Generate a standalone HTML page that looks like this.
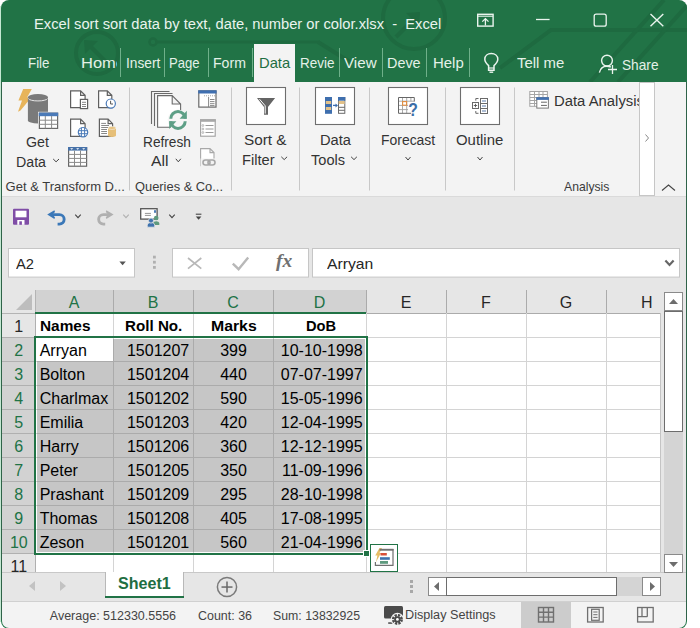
<!DOCTYPE html><html><head><meta charset="utf-8"><style>
html,body{margin:0;padding:0;width:700px;height:628px;overflow:hidden;background:#fff}
.a{position:absolute;display:block}
.t{position:absolute;z-index:2;white-space:pre;line-height:normal;font-family:"Liberation Sans",sans-serif}
</style></head><body>
<div class="a" style="left:0px;top:0px;width:700px;height:628px;background:#ffffff;"></div>
<div class="a" style="left:0px;top:6px;width:1px;height:616px;background:#c4e8d2;"></div>
<div class="a" style="left:1px;top:0px;width:686px;height:629px;background:#217346;border-radius:8px 8px 8px 8px;"></div>
<svg class="a" style="left:0;top:0" width="700" height="82" viewBox="0 0 700 82"><defs><clipPath id="wc"><rect x="1" y="0" width="686" height="100" rx="8"/></clipPath></defs><g clip-path="url(#wc)"><g fill="none" stroke="#1e6a40" stroke-width="4"><circle cx="97" cy="53" r="21"/><path d="M108,64 L90,46"/><circle cx="414" cy="18" r="31"/><path d="M396,37 L414,19"/><path d="M500,68 L551,30 L690,30"/><path d="M664,0 L590,82"/><path d="M692,0 L618,82"/><path d="M318,42 L350,62"/></g><g fill="#1e6a40"><polygon points="84,40 98,41 85,54"/><polygon points="420,12 406,13 419,26"/></g><circle cx="153" cy="42" r="3.5" fill="none" stroke="#1e6a40" stroke-width="2.5"/><path d="M157,42 H320" stroke="#1e6a40" stroke-width="3"/></g></svg>
<div class="a" style="left:2px;top:82px;width:684px;height:114px;background:#f3f3f3;"></div>
<div class="a" style="left:2px;top:196px;width:684px;height:1px;background:#dadada;"></div>
<div class="a" style="left:2px;top:197px;width:684px;height:93px;background:#e6e6e6;"></div>
<div class="a" style="left:36px;top:313px;width:624px;height:259px;background:#ffffff;"></div>
<div class="a" style="left:2px;top:290px;width:659px;height:23px;background:#e6e6e6;"></div>
<div class="a" style="left:35px;top:290px;width:331px;height:23px;background:#d2d2d2;"></div>
<div class="a" style="left:2px;top:313px;width:33px;height:259px;background:#e6e6e6;"></div>
<div class="a" style="left:2px;top:337px;width:33px;height:216px;background:#d2d2d2;"></div>
<svg class="a" style="left:16px;top:294px;" width="17" height="16" viewBox="0 0 17 16"><polygon points="16,0 16,16 0,16" fill="#bdbdbd"/></svg>
<div class="a" style="left:113px;top:290px;width:1px;height:23px;background:#ababab;"></div>
<div class="a" style="left:193px;top:290px;width:1px;height:23px;background:#ababab;"></div>
<div class="a" style="left:273px;top:290px;width:1px;height:23px;background:#ababab;"></div>
<div class="a" style="left:366px;top:290px;width:1px;height:23px;background:#ababab;"></div>
<div class="a" style="left:446px;top:290px;width:1px;height:23px;background:#ababab;"></div>
<div class="a" style="left:526px;top:290px;width:1px;height:23px;background:#ababab;"></div>
<div class="a" style="left:606px;top:290px;width:1px;height:23px;background:#ababab;"></div>
<div class="a" style="left:35px;top:290px;width:1px;height:23px;background:#b4b4b4;"></div>
<div class="a" style="left:2px;top:313px;width:33px;height:1px;background:#b4b4b4;"></div>
<div class="a" style="left:366px;top:313px;width:294px;height:1px;background:#ababab;"></div>
<div class="a" style="left:2px;top:337px;width:33px;height:1px;background:#b0b0b0;"></div>
<div class="a" style="left:2px;top:361px;width:33px;height:1px;background:#b0b0b0;"></div>
<div class="a" style="left:2px;top:385px;width:33px;height:1px;background:#b0b0b0;"></div>
<div class="a" style="left:2px;top:409px;width:33px;height:1px;background:#b0b0b0;"></div>
<div class="a" style="left:2px;top:433px;width:33px;height:1px;background:#b0b0b0;"></div>
<div class="a" style="left:2px;top:457px;width:33px;height:1px;background:#b0b0b0;"></div>
<div class="a" style="left:2px;top:481px;width:33px;height:1px;background:#b0b0b0;"></div>
<div class="a" style="left:2px;top:505px;width:33px;height:1px;background:#b0b0b0;"></div>
<div class="a" style="left:2px;top:529px;width:33px;height:1px;background:#b0b0b0;"></div>
<div class="a" style="left:2px;top:553px;width:33px;height:1px;background:#b0b0b0;"></div>
<div class="a" style="left:35px;top:313px;width:1px;height:259px;background:#b0b0b0;"></div>
<div class="a" style="left:113px;top:313px;width:1px;height:259px;background:#d4d4d4;"></div>
<div class="a" style="left:193px;top:313px;width:1px;height:259px;background:#d4d4d4;"></div>
<div class="a" style="left:273px;top:313px;width:1px;height:259px;background:#d4d4d4;"></div>
<div class="a" style="left:366px;top:313px;width:1px;height:259px;background:#d4d4d4;"></div>
<div class="a" style="left:446px;top:313px;width:1px;height:259px;background:#d4d4d4;"></div>
<div class="a" style="left:526px;top:313px;width:1px;height:259px;background:#d4d4d4;"></div>
<div class="a" style="left:606px;top:313px;width:1px;height:259px;background:#d4d4d4;"></div>
<div class="a" style="left:36px;top:337px;width:624px;height:1px;background:#d4d4d4;"></div>
<div class="a" style="left:36px;top:361px;width:624px;height:1px;background:#d4d4d4;"></div>
<div class="a" style="left:36px;top:385px;width:624px;height:1px;background:#d4d4d4;"></div>
<div class="a" style="left:36px;top:409px;width:624px;height:1px;background:#d4d4d4;"></div>
<div class="a" style="left:36px;top:433px;width:624px;height:1px;background:#d4d4d4;"></div>
<div class="a" style="left:36px;top:457px;width:624px;height:1px;background:#d4d4d4;"></div>
<div class="a" style="left:36px;top:481px;width:624px;height:1px;background:#d4d4d4;"></div>
<div class="a" style="left:36px;top:505px;width:624px;height:1px;background:#d4d4d4;"></div>
<div class="a" style="left:36px;top:529px;width:624px;height:1px;background:#d4d4d4;"></div>
<div class="a" style="left:36px;top:553px;width:624px;height:1px;background:#d4d4d4;"></div>
<div class="a" style="left:660px;top:313px;width:1px;height:259px;background:#c4c4c4;"></div>
<div class="a" style="left:37px;top:339px;width:328px;height:213px;background:#c6c6c6;"></div>
<div class="a" style="left:37px;top:339px;width:76px;height:22px;background:#ffffff;"></div>
<div class="a" style="left:113px;top:339px;width:1px;height:213px;background:#ababab;"></div>
<div class="a" style="left:193px;top:339px;width:1px;height:213px;background:#ababab;"></div>
<div class="a" style="left:273px;top:339px;width:1px;height:213px;background:#ababab;"></div>
<div class="a" style="left:37px;top:361px;width:328px;height:1px;background:#ababab;"></div>
<div class="a" style="left:37px;top:385px;width:328px;height:1px;background:#ababab;"></div>
<div class="a" style="left:37px;top:409px;width:328px;height:1px;background:#ababab;"></div>
<div class="a" style="left:37px;top:433px;width:328px;height:1px;background:#ababab;"></div>
<div class="a" style="left:37px;top:457px;width:328px;height:1px;background:#ababab;"></div>
<div class="a" style="left:37px;top:481px;width:328px;height:1px;background:#ababab;"></div>
<div class="a" style="left:37px;top:505px;width:328px;height:1px;background:#ababab;"></div>
<div class="a" style="left:37px;top:529px;width:328px;height:1px;background:#ababab;"></div>
<div class="a" style="left:113px;top:339px;width:1px;height:22px;background:#ababab;"></div>
<div class="a" style="left:35px;top:312px;width:331px;height:2px;background:#217346;"></div>
<div class="a" style="left:34px;top:336px;width:334px;height:2px;background:#217346;"></div>
<div class="a" style="left:34px;top:336px;width:2px;height:219px;background:#217346;"></div>
<div class="a" style="left:366px;top:336px;width:2px;height:214px;background:#217346;"></div>
<div class="a" style="left:34px;top:553px;width:329px;height:2px;background:#217346;"></div>
<div class="a" style="left:363px;top:550px;width:7px;height:7px;background:#ffffff;"></div>
<div class="a" style="left:364px;top:551px;width:5px;height:5px;background:#217346;"></div>
<div class="a" style="left:370px;top:544px;width:28px;height:28px;background:#ffffff;box-sizing:border-box;border:1px solid #217346;"></div>
<div class="a" style="left:661px;top:290px;width:25px;height:283px;background:#e6e6e6;"></div>
<div class="a" style="left:664px;top:292px;width:19px;height:19px;background:#ffffff;box-sizing:border-box;border:1px solid #8a8a8a;"></div>
<svg class="a" style="left:664px;top:292px;" width="19" height="19" viewBox="0 0 19 19"><polygon points="5,12 14,12 9.5,7" fill="#6d6d6d"/></svg>
<div class="a" style="left:664px;top:311px;width:19px;height:243px;background:#d4d4d4;"></div>
<div class="a" style="left:664px;top:311px;width:19px;height:121px;background:#ffffff;box-sizing:border-box;border:1.5px solid #6d6d6d;"></div>
<div class="a" style="left:2px;top:572px;width:684px;height:29px;background:#e6e6e6;"></div>
<div class="a" style="left:2px;top:572px;width:684px;height:1px;background:#c8c8c8;"></div>
<div class="a" style="left:2px;top:601px;width:684px;height:1px;background:#d0d0d0;"></div>
<div class="a" style="left:664px;top:554px;width:19px;height:19px;background:#ffffff;box-sizing:border-box;border:1px solid #8a8a8a;"></div>
<svg class="a" style="left:664px;top:554px;" width="19" height="19" viewBox="0 0 19 19"><polygon points="5,8 14,8 9.5,13" fill="#6d6d6d"/></svg>
<div class="a" style="left:105px;top:572px;width:79px;height:24px;background:#ffffff;box-sizing:border-box;border-left:1px solid #b8b8b8;border-right:1px solid #b8b8b8;"></div>
<div class="a" style="left:105px;top:596px;width:79px;height:2px;background:#217346;"></div>
<svg class="a" style="left:29px;top:581px;" width="8" height="11" viewBox="0 0 8 11"><polygon points="6,0 6,10 0,5" fill="#c2c2c2"/></svg>
<svg class="a" style="left:59px;top:581px;" width="8" height="11" viewBox="0 0 8 11"><polygon points="1,0 1,10 7,5" fill="#c2c2c2"/></svg>
<svg class="a" style="left:216px;top:576px;" width="22" height="22" viewBox="0 0 22 22"><circle cx="11" cy="11" r="9.6" fill="none" stroke="#7a7a7a" stroke-width="1.5"/><rect x="5.5" y="10.3" width="11" height="1.5" fill="#6a6a6a"/><rect x="10.25" y="5.5" width="1.5" height="11" fill="#6a6a6a"/></svg>
<div class="a" style="left:410px;top:580px;width:3px;height:3px;background:#a8a8a8;"></div>
<div class="a" style="left:410px;top:585px;width:3px;height:3px;background:#a8a8a8;"></div>
<div class="a" style="left:410px;top:590px;width:3px;height:3px;background:#a8a8a8;"></div>
<div class="a" style="left:428px;top:577px;width:233px;height:19px;background:#d4d4d4;"></div>
<div class="a" style="left:428px;top:577px;width:19px;height:19px;background:#ffffff;box-sizing:border-box;border:1px solid #8a8a8a;"></div>
<svg class="a" style="left:428px;top:577px;" width="19" height="19" viewBox="0 0 19 19"><polygon points="11,5 11,14 6,9.5" fill="#6d6d6d"/></svg>
<div class="a" style="left:446px;top:577px;width:171px;height:19px;background:#ffffff;box-sizing:border-box;border:1.5px solid #6d6d6d;"></div>
<div class="a" style="left:642px;top:577px;width:19px;height:19px;background:#ffffff;box-sizing:border-box;border:1px solid #8a8a8a;"></div>
<svg class="a" style="left:642px;top:577px;" width="19" height="19" viewBox="0 0 19 19"><polygon points="8,5 8,14 13,9.5" fill="#6d6d6d"/></svg>
<div class="a" style="left:2px;top:602px;width:684px;height:26px;background:#f3f3f3;border-radius:0 0 7px 7px;"></div>
<div class="a" style="left:521px;top:602px;width:50px;height:26px;background:#cccccc;"></div>
<div class="a" style="left:1px;top:82px;width:1px;height:538px;background:#2f6349;"></div>
<div class="a" style="left:686px;top:82px;width:1px;height:538px;background:#2f6349;"></div>
<div class="t" style="left:34.00px;top:16.03px;font-size:14px;color:#eaf4ee;transform:scaleX(1.0510);transform-origin:0 0;">Excel sort sort data by text, date, number or color.xlsx  -  Excel</div>
<div class="t" style="left:27.50px;top:54.88px;font-size:14.5px;color:#e4f1e8;transform:scaleX(0.9210);transform-origin:0 0;">File</div>
<div class="a" style="left:78px;top:44px;width:38.5px;height:36px;overflow:hidden">
<div class="t" style="left:3.40px;top:10.88px;font-size:14.5px;color:#e4f1e8;transform:scaleX(1.1365);transform-origin:0 0;">Home</div>
</div>
<div class="t" style="left:125.70px;top:54.88px;font-size:14.5px;color:#e4f1e8;transform:scaleX(0.9462);transform-origin:0 0;">Insert</div>
<div class="t" style="left:169.40px;top:54.88px;font-size:14.5px;color:#e4f1e8;transform:scaleX(0.9038);transform-origin:0 0;">Page</div>
<div class="t" style="left:213.40px;top:54.88px;font-size:14.5px;color:#e4f1e8;transform:scaleX(0.9717);transform-origin:0 0;">Form</div>
<div class="a" style="left:254px;top:44px;width:41px;height:38px;background:#f3f3f3;"></div>
<div class="t" style="left:258.50px;top:54.88px;font-size:14.5px;color:#1e6e42;transform:scaleX(1.0174);transform-origin:0 0;">Data</div>
<div class="t" style="left:300.30px;top:54.88px;font-size:14.5px;color:#e4f1e8;transform:scaleX(0.9312);transform-origin:0 0;">Revie</div>
<div class="t" style="left:344.30px;top:54.88px;font-size:14.5px;color:#e4f1e8;transform:scaleX(1.0457);transform-origin:0 0;">View</div>
<div class="t" style="left:387.20px;top:54.88px;font-size:14.5px;color:#e4f1e8;transform:scaleX(0.9924);transform-origin:0 0;">Deve</div>
<div class="t" style="left:432.50px;top:54.88px;font-size:14.5px;color:#e4f1e8;transform:scaleX(1.0303);transform-origin:0 0;">Help</div>
<div class="t" style="left:516.50px;top:54.58px;font-size:14.5px;color:#e4f1e8;transform:scaleX(1.0269);transform-origin:0 0;">Tell me</div>
<div class="t" style="left:621.50px;top:56.78px;font-size:14.5px;color:#e4f1e8;transform:scaleX(0.9428);transform-origin:0 0;">Share</div>
<div class="a" style="left:120px;top:48px;width:1px;height:29px;background:#6fb08a;"></div>
<div class="a" style="left:164px;top:48px;width:1px;height:29px;background:#6fb08a;"></div>
<div class="a" style="left:208px;top:48px;width:1px;height:29px;background:#6fb08a;"></div>
<div class="a" style="left:252px;top:48px;width:1px;height:29px;background:#6fb08a;"></div>
<div class="a" style="left:339px;top:48px;width:1px;height:29px;background:#6fb08a;"></div>
<div class="a" style="left:382px;top:48px;width:1px;height:29px;background:#6fb08a;"></div>
<div class="a" style="left:426px;top:48px;width:1px;height:29px;background:#6fb08a;"></div>
<div class="a" style="left:469px;top:48px;width:1px;height:29px;background:#6fb08a;"></div>
<div class="t" style="left:26.30px;top:134.13px;font-size:14px;color:#333333;transform:scaleX(1.0160);transform-origin:0 0;">Get</div>
<div class="t" style="left:16.00px;top:153.83px;font-size:14px;color:#333333;transform:scaleX(1.0132);transform-origin:0 0;">Data</div>
<div class="t" style="left:142.50px;top:133.53px;font-size:14px;color:#333333;transform:scaleX(0.9776);transform-origin:0 0;">Refresh</div>
<div class="t" style="left:151.00px;top:153.33px;font-size:14px;color:#333333;transform:scaleX(1.1261);transform-origin:0 0;">All</div>
<div class="t" style="left:244.40px;top:131.73px;font-size:14px;color:#333333;transform:scaleX(1.0946);transform-origin:0 0;">Sort &amp;</div>
<div class="t" style="left:242.40px;top:151.73px;font-size:14px;color:#333333;transform:scaleX(1.0489);transform-origin:0 0;">Filter</div>
<div class="t" style="left:319.60px;top:131.73px;font-size:14px;color:#333333;transform:scaleX(1.0469);transform-origin:0 0;">Data</div>
<div class="t" style="left:311.00px;top:151.73px;font-size:14px;color:#333333;transform:scaleX(1.0401);transform-origin:0 0;">Tools</div>
<div class="t" style="left:380.50px;top:132.23px;font-size:14px;color:#333333;transform:scaleX(0.9952);transform-origin:0 0;">Forecast</div>
<div class="t" style="left:456.40px;top:132.23px;font-size:14px;color:#333333;transform:scaleX(1.0658);transform-origin:0 0;">Outline</div>
<div class="a" style="left:550px;top:88px;width:89px;height:24px;overflow:hidden">
<div class="t" style="left:4.00px;top:4.63px;font-size:14px;color:#333333;transform:scaleX(1.0608);transform-origin:0 0;">Data Analysis</div>
</div>
<div class="t" style="left:5.60px;top:179.24px;font-size:13px;color:#3b3b3b;">Get &amp; Transform D...</div>
<div class="t" style="left:135.00px;top:179.24px;font-size:13px;color:#3b3b3b;transform:scaleX(0.9904);transform-origin:0 0;">Queries &amp; Co...</div>
<div class="t" style="left:563.90px;top:179.13px;font-size:13px;color:#3b3b3b;transform:scaleX(0.9375);transform-origin:0 0;">Analysis</div>
<div class="t" style="left:15.70px;top:255.98px;font-size:14.5px;color:#262626;transform:scaleX(1.0134);transform-origin:0 0;">A2</div>
<div class="t" style="left:327.00px;top:255.98px;font-size:14.5px;color:#262626;transform:scaleX(1.0819);transform-origin:0 0;">Arryan</div>
<div class="t" style="left:68.64px;top:293.52px;font-size:16px;color:#217346;">A</div>
<div class="t" style="left:147.68px;top:293.52px;font-size:16px;color:#217346;">B</div>
<div class="t" style="left:227.24px;top:293.52px;font-size:16px;color:#217346;">C</div>
<div class="t" style="left:313.74px;top:293.52px;font-size:16px;color:#217346;">D</div>
<div class="t" style="left:400.68px;top:293.52px;font-size:16px;color:#262626;">E</div>
<div class="t" style="left:481.12px;top:293.52px;font-size:16px;color:#262626;">F</div>
<div class="t" style="left:559.76px;top:293.52px;font-size:16px;color:#262626;">G</div>
<div class="t" style="left:641.04px;top:293.52px;font-size:16px;color:#262626;">H</div>
<div class="t" style="left:14.36px;top:318.12px;font-size:16px;color:#262626;">1</div>
<div class="t" style="left:14.36px;top:342.12px;font-size:16px;color:#217346;">2</div>
<div class="t" style="left:14.36px;top:366.12px;font-size:16px;color:#217346;">3</div>
<div class="t" style="left:14.36px;top:390.12px;font-size:16px;color:#217346;">4</div>
<div class="t" style="left:14.36px;top:414.12px;font-size:16px;color:#217346;">5</div>
<div class="t" style="left:14.36px;top:438.12px;font-size:16px;color:#217346;">6</div>
<div class="t" style="left:14.36px;top:462.12px;font-size:16px;color:#217346;">7</div>
<div class="t" style="left:14.36px;top:486.12px;font-size:16px;color:#217346;">8</div>
<div class="t" style="left:14.36px;top:510.12px;font-size:16px;color:#217346;">9</div>
<div class="t" style="left:9.92px;top:534.12px;font-size:16px;color:#217346;">10</div>
<div class="t" style="left:10.48px;top:558.12px;font-size:16px;color:#262626;">11</div>
<div class="t" style="left:39.70px;top:317.37px;font-size:15.5px;color:#000;font-weight:bold;transform:scaleX(0.9933);transform-origin:0 0;">Names</div>
<div class="t" style="left:124.90px;top:317.37px;font-size:15.5px;color:#000;font-weight:bold;transform:scaleX(0.9793);transform-origin:0 0;">Roll No.</div>
<div class="t" style="left:211.00px;top:317.37px;font-size:15.5px;color:#000;font-weight:bold;transform:scaleX(1.0202);transform-origin:0 0;">Marks</div>
<div class="t" style="left:305.80px;top:317.37px;font-size:15.5px;color:#000;font-weight:bold;transform:scaleX(0.9450);transform-origin:0 0;">DoB</div>
<div class="t" style="left:39.70px;top:341.52px;font-size:16px;color:#000;">Arryan</div>
<div class="t" style="left:126.98px;top:341.52px;font-size:16px;color:#000;">1501207</div>
<div class="t" style="left:220.14px;top:341.52px;font-size:16px;color:#000;">399</div>
<div class="t" style="left:280.76px;top:341.52px;font-size:16px;color:#000;">10-10-1998</div>
<div class="t" style="left:39.70px;top:365.52px;font-size:16px;color:#000;">Bolton</div>
<div class="t" style="left:126.98px;top:365.52px;font-size:16px;color:#000;">1501204</div>
<div class="t" style="left:220.14px;top:365.52px;font-size:16px;color:#000;">440</div>
<div class="t" style="left:280.76px;top:365.52px;font-size:16px;color:#000;">07-07-1997</div>
<div class="t" style="left:39.70px;top:389.52px;font-size:16px;color:#000;">Charlmax</div>
<div class="t" style="left:126.98px;top:389.52px;font-size:16px;color:#000;">1501202</div>
<div class="t" style="left:220.14px;top:389.52px;font-size:16px;color:#000;">590</div>
<div class="t" style="left:280.76px;top:389.52px;font-size:16px;color:#000;">15-05-1996</div>
<div class="t" style="left:39.70px;top:413.52px;font-size:16px;color:#000;">Emilia</div>
<div class="t" style="left:126.98px;top:413.52px;font-size:16px;color:#000;">1501203</div>
<div class="t" style="left:220.14px;top:413.52px;font-size:16px;color:#000;">420</div>
<div class="t" style="left:280.76px;top:413.52px;font-size:16px;color:#000;">12-04-1995</div>
<div class="t" style="left:39.70px;top:437.52px;font-size:16px;color:#000;">Harry</div>
<div class="t" style="left:126.98px;top:437.52px;font-size:16px;color:#000;">1501206</div>
<div class="t" style="left:220.14px;top:437.52px;font-size:16px;color:#000;">360</div>
<div class="t" style="left:280.76px;top:437.52px;font-size:16px;color:#000;">12-12-1995</div>
<div class="t" style="left:39.70px;top:461.52px;font-size:16px;color:#000;">Peter</div>
<div class="t" style="left:126.98px;top:461.52px;font-size:16px;color:#000;">1501205</div>
<div class="t" style="left:220.14px;top:461.52px;font-size:16px;color:#000;">350</div>
<div class="t" style="left:281.96px;top:461.52px;font-size:16px;color:#000;">11-09-1996</div>
<div class="t" style="left:39.70px;top:485.52px;font-size:16px;color:#000;">Prashant</div>
<div class="t" style="left:126.98px;top:485.52px;font-size:16px;color:#000;">1501209</div>
<div class="t" style="left:220.14px;top:485.52px;font-size:16px;color:#000;">295</div>
<div class="t" style="left:280.76px;top:485.52px;font-size:16px;color:#000;">28-10-1998</div>
<div class="t" style="left:39.70px;top:509.52px;font-size:16px;color:#000;">Thomas</div>
<div class="t" style="left:126.98px;top:509.52px;font-size:16px;color:#000;">1501208</div>
<div class="t" style="left:220.14px;top:509.52px;font-size:16px;color:#000;">405</div>
<div class="t" style="left:280.76px;top:509.52px;font-size:16px;color:#000;">17-08-1995</div>
<div class="t" style="left:39.70px;top:533.52px;font-size:16px;color:#000;">Zeson</div>
<div class="t" style="left:126.98px;top:533.52px;font-size:16px;color:#000;">1501201</div>
<div class="t" style="left:220.14px;top:533.52px;font-size:16px;color:#000;">560</div>
<div class="t" style="left:280.76px;top:533.52px;font-size:16px;color:#000;">21-04-1996</div>
<div class="t" style="left:117.90px;top:574.82px;font-size:16px;color:#1e6e42;font-weight:bold;transform:scaleX(1.0042);transform-origin:0 0;">Sheet1</div>
<div class="t" style="left:49.80px;top:609.29px;font-size:12.5px;color:#444444;">Average: 512330.5556</div>
<div class="t" style="left:197.50px;top:609.29px;font-size:12.5px;color:#444444;transform:scaleX(0.9965);transform-origin:0 0;">Count: 36</div>
<div class="t" style="left:272.50px;top:609.29px;font-size:12.5px;color:#444444;transform:scaleX(0.9858);transform-origin:0 0;">Sum: 13832925</div>
<div class="t" style="left:405.40px;top:608.39px;font-size:12.5px;color:#444444;transform:scaleX(1.0120);transform-origin:0 0;">Display Settings</div>
<svg class="a" style="left:0;top:0" width="700" height="628" viewBox="0 0 700 628"><polygon points="23.2,88.9 31.8,88.9 27.2,97.2 30.4,98.4 20.5,110.5 18.0,111.8 22.0,100.5 18.4,100.5" fill="#e7b45a"/><path d="M27.9,97.2 L27.9,120.5 A10.05,3 0 0 0 48,120.5 L48,97.2 Z" fill="#7a7a7a"/><ellipse cx="37.95" cy="97.2" rx="10.05" ry="3.1" fill="#7a7a7a"/><path d="M28.4,98.6 A9.6,2.6 0 0 0 47.5,98.6" fill="none" stroke="#f3f3f3" stroke-width="0.9"/><rect x="38" y="111.8" width="21" height="18" fill="#f3f3f3"/><rect x="39.4" y="113.2" width="18.2" height="15.2" fill="#fff" stroke="#6a6a6a" stroke-width="1.2"/><rect x="38.8" y="112.6" width="19.4" height="3.6" fill="#4b7ab8"/><path d="M45.3,116 V128.4 M51.6,116 V128.4 M39.4,120.2 H57.6 M39.4,124.3 H57.6" stroke="#8a8a8a" stroke-width="1"/><path d="M70.6,90.8 H80.6 L85.1,95.3 V107.6 H70.6 Z M80.6,90.8 V95.3 H85.1" fill="#fff" stroke="#5f5f5f" stroke-width="1.2" stroke-linejoin="miter"/><rect x="80.4" y="99.4" width="7.2" height="9.2" fill="#fff" stroke="#5f5f5f" stroke-width="1.2"/><path d="M82,102.3 H86 M82,104.5 H86 M82,106.5 H86" stroke="#7a7a7a" stroke-width="0.9"/><path d="M98.6,90.8 H107.3 L111.8,95.3 V107.6 H98.6 Z M107.3,90.8 V95.3 H111.8" fill="#fff" stroke="#5f5f5f" stroke-width="1.2" stroke-linejoin="miter"/><circle cx="110.8" cy="103.6" r="4.6" fill="#fff" stroke="#4a7ab8" stroke-width="1.2"/><path d="M110.6,100.8 V104 H113" fill="none" stroke="#555" stroke-width="1"/><path d="M70.6,119.2 H80.6 L85.1,123.7 V136.4 H70.6 Z M80.6,119.2 V123.7 H85.1" fill="#fff" stroke="#5f5f5f" stroke-width="1.2" stroke-linejoin="miter"/><circle cx="83" cy="132.2" r="4.7" fill="#fff" stroke="#4a7ab8" stroke-width="1.2"/><path d="M78.4,130.7 H87.6 M78.4,133.7 H87.6 M81.4,127.6 V136.8 M84.6,127.6 V136.8" stroke="#4a7ab8" stroke-width="1"/><path d="M99.4,119.2 H108.10000000000001 L112.60000000000001,123.7 V136.4 H99.4 Z M108.10000000000001,119.2 V123.7 H112.60000000000001" fill="#fff" stroke="#5f5f5f" stroke-width="1.2" stroke-linejoin="miter"/><path d="M101.2,123.4 H106 M101.2,125.5 H109 M101.2,127.5 H108 M101.2,129.5 H107 M101.2,131.5 H107 M101.2,133.5 H107" stroke="#7a7a7a" stroke-width="0.9"/><path d="M108,128 V135.5 A4,1.4 0 0 0 116,135.5 V128 Z" fill="#e6bf78"/><ellipse cx="112" cy="128" rx="4" ry="1.4" fill="#e6bf78" stroke="#f3f3f3" stroke-width="0.6"/><rect x="68.6" y="147.6" width="18" height="18.6" fill="#fff" stroke="#666" stroke-width="1.2"/><rect x="68" y="147" width="19.2" height="3.6" fill="#4671a8"/><path d="M74.5,150.6 V166 M80.5,150.6 V166 M68.6,154.4 H86.6 M68.6,158.4 H86.6 M68.6,162.4 H86.6" stroke="#8a8a8a" stroke-width="1"/><path d="M70.2,148.2 h3 l-1.5,1.6z M76.2,148.2 h3 l-1.5,1.6z M82.2,148.2 h3 l-1.5,1.6z" fill="#fff"/><path d="M53.2,159.0 L56.1,161.8 L59.0,159.0" fill="none" stroke="#444" stroke-width="1"/><path d="M175.8,158.8 L178.3,161.8 L180.8,158.8" fill="none" stroke="#444" stroke-width="1"/><path d="M281.3,156.79999999999998 L284.2,159.6 L287.09999999999997,156.79999999999998" fill="none" stroke="#444" stroke-width="1"/><path d="M351.1,156.79999999999998 L354,159.6 L356.9,156.79999999999998" fill="none" stroke="#444" stroke-width="1"/><path d="M405.5,157.0 L408,160.0 L410.5,157.0" fill="none" stroke="#444" stroke-width="1"/><path d="M477.5,157.0 L480,160.0 L482.5,157.0" fill="none" stroke="#444" stroke-width="1"/><rect x="129.0" y="87.5" width="1" height="103" fill="#c8c8c8"/><rect x="231.0" y="87.5" width="1" height="103" fill="#c8c8c8"/><rect x="299.0" y="87.5" width="1" height="103" fill="#c8c8c8"/><rect x="369.0" y="87.5" width="1" height="103" fill="#c8c8c8"/><rect x="445.0" y="87.5" width="1" height="103" fill="#c8c8c8"/><rect x="514.0" y="87.5" width="1" height="103" fill="#c8c8c8"/><path d="M151.5,124 V91.5 H169.5" fill="none" stroke="#6a6a6a" stroke-width="1.1"/><path d="M154.5,126 V93.5 H172.5" fill="none" stroke="#6a6a6a" stroke-width="1.1"/><path d="M157.6,95.6 H172.2 L180.6,104.0 V127.19999999999999 H157.6 Z M172.2,95.6 V104.0 H180.6" fill="#fff" stroke="#6a6a6a" stroke-width="1.1" stroke-linejoin="miter"/><circle cx="178" cy="120" r="10.4" fill="#f6f6f6"/><path d="M170.8,118.7 A7.2,7.2 0 0 1 185.2,118.7" fill="none" stroke="#5d9f86" stroke-width="3"/><polygon points="186.8,110.8 186.8,118.7 179.6,118.7" fill="#5d9f86"/><path d="M185.2,121.2 A7.2,7.2 0 0 1 170.8,121.2" fill="none" stroke="#5d9f86" stroke-width="3"/><polygon points="169.2,121.2 176.4,121.2 169.2,129.1" fill="#5d9f86"/><rect x="198.8" y="90.9" width="17.2" height="16.2" fill="#fff" stroke="#6a6a6a" stroke-width="1.2"/><rect x="198.2" y="90.3" width="18.4" height="3.2" fill="#3f6fb0"/><path d="M208.6,97 V107 M210,99.5 H214.5 M210,101.6 H214.5 M210,103.7 H214.5 M210,105.6 H214.5" stroke="#7a7a7a" stroke-width="0.9"/><path d="M204,95.8 H215" stroke="#9a9a9a" stroke-width="0.9" stroke-dasharray="1,1"/><rect x="200.6" y="119.8" width="14.6" height="16.4" fill="#fff" stroke="#a0a0a0" stroke-width="1.1"/><rect x="200" y="119.2" width="15.8" height="2.6" fill="#a8a8a8"/><path d="M205.5,125.5 H213.5 M205.5,129 H213.5 M205.5,132.5 H213.5" stroke="#9a9a9a" stroke-width="1"/><circle cx="202.9" cy="125.5" r="0.9" fill="none" stroke="#9a9a9a" stroke-width="0.7"/><circle cx="202.9" cy="129" r="0.9" fill="none" stroke="#9a9a9a" stroke-width="0.7"/><circle cx="202.9" cy="132.5" r="0.9" fill="none" stroke="#9a9a9a" stroke-width="0.7"/><path d="M200.6,148.6 H210.0 L214.0,152.6 V165.6 H200.6 Z M210.0,148.6 V152.6 H214.0" fill="#fff" stroke="#a8a8a8" stroke-width="1.1" stroke-linejoin="miter"/><rect x="200.5" y="158.5" width="17" height="8.5" fill="#f3f3f3"/><rect x="203" y="160" width="7" height="5" rx="2.5" fill="none" stroke="#a8a8a8" stroke-width="1.6"/><rect x="208" y="160" width="7" height="5" rx="2.5" fill="none" stroke="#a8a8a8" stroke-width="1.6"/><rect x="246.5" y="87.5" width="39" height="37" fill="#fff" stroke="#6e6e6e" stroke-width="1.1"/><rect x="315.5" y="87.5" width="39" height="37" fill="#fff" stroke="#6e6e6e" stroke-width="1.1"/><rect x="388.5" y="87.5" width="39" height="37" fill="#fff" stroke="#6e6e6e" stroke-width="1.1"/><rect x="460.5" y="87.5" width="39" height="37" fill="#fff" stroke="#6e6e6e" stroke-width="1.1"/><polygon points="257,98 275.1,98 268,107 268,114.8 264,114.8 264,107" fill="#646464"/><path d="M259.5,99.2 L265.2,105.8 V113.6" fill="none" stroke="#fff" stroke-width="1"/><rect x="325" y="97" width="7" height="16.8" fill="#3f6fae"/><rect x="325.8" y="101" width="5.4" height="3" fill="#e3c28a"/><rect x="325.8" y="107" width="5.4" height="3" fill="#e3c28a"/><path d="M333,105.4 H336.5" stroke="#3f6fae" stroke-width="1.3"/><polygon points="335.5,103.4 338,105.4 335.5,107.4" fill="#3f6fae"/><rect x="338.5" y="97.5" width="6.3" height="15.8" fill="#fff" stroke="#6a6a6a" stroke-width="1"/><rect x="338" y="97" width="7.3" height="3.7" fill="#3f6fae"/><rect x="338.7" y="101" width="5.9" height="3" fill="#e3c28a"/><path d="M338.5,107.3 H344.8 M338.5,110.3 H344.8" stroke="#6a6a6a" stroke-width="1"/><path d="M398.5,101.2 H414.3 M398.5,105.4 H408 M398.5,109.6 H408 M402.5,97.5 V113.3 M406.7,97.5 V113.3 M410.9,97.5 V101.2" stroke="#a0a0a0" stroke-width="0.9"/><path d="M414.3,101.5 V97.5 H398.5 V113.3 H411" fill="none" stroke="#666" stroke-width="1"/><rect x="402.6" y="101.6" width="4" height="3.6" fill="#fff" stroke="#e08a3c" stroke-width="1.1"/><text x="408.2" y="115.8" font-family="Liberation Sans" font-weight="bold" font-size="17.5" fill="#3b6ea8" textLength="9.6" lengthAdjust="spacingAndGlyphs">?</text><rect x="472.5" y="102.5" width="6" height="6" fill="#fff" stroke="#6a6a6a" stroke-width="1"/><path d="M475.5,103.8 V107.2 M473.8,105.5 H477.2" stroke="#555" stroke-width="0.9"/><path d="M478.5,98.5 H475.8 V100.6 M478.5,113.3 H475.8 V111" fill="none" stroke="#6a6a6a" stroke-width="1"/><rect x="480.5" y="98.5" width="7" height="15" fill="#fff" stroke="#6a6a6a" stroke-width="1"/><path d="M480.5,103.5 H487.5 M480.5,108.5 H487.5" stroke="#6a6a6a" stroke-width="1"/><path d="M482,101 H486 M482,106 H486 M482,111 H486" stroke="#5a7aa8" stroke-width="1.1"/><rect x="529.8" y="91.5" width="17.6" height="14.8" fill="#fff" stroke="#a5a5a5" stroke-width="1"/><path d="M534.5,91.5 V106.3 M539,91.5 V106.3 M543,91.5 V106.3 M529.8,94.5 H547.4 M529.8,97.5 H547.4 M529.8,100.5 H547.4 M529.8,103.5 H547.4" stroke="#a5a5a5" stroke-width="1"/><rect x="536.8" y="97.7" width="11.6" height="10.4" fill="#fff" stroke="#7a7a7a" stroke-width="1"/><rect x="536.3" y="97.2" width="12.6" height="2.7" fill="#4472b0"/><path d="M541,102.2 H546.9 M541,105.4 H546.9" stroke="#666" stroke-width="1"/><rect x="639.5" y="82.5" width="15" height="113" fill="#fff" stroke="#c6c6c6" stroke-width="1"/><path d="M645.5,134.5 L648.5,138 L645.5,141.5" fill="none" stroke="#888" stroke-width="1"/><path d="M662,190.5 L668.5,185 L675,190.5" fill="none" stroke="#444" stroke-width="1.1"/><rect x="477.7" y="14.3" width="15.4" height="11.8" fill="none" stroke="#eaf4ee" stroke-width="1.4"/><path d="M478,16.2 H493" stroke="#eaf4ee" stroke-width="1.1"/><path d="M485.4,25.5 V18.8 M482.3,21.6 L485.4,18.6 L488.5,21.6" fill="none" stroke="#eaf4ee" stroke-width="1.3"/><path d="M536,19.5 H549.6" stroke="#eaf4ee" stroke-width="1.3"/><rect x="594.2" y="14.2" width="12" height="12" rx="2" fill="none" stroke="#eaf4ee" stroke-width="1.3"/><path d="M650.5,14 L663.3,26.3 M663.3,14 L650.5,26.3" stroke="#eaf4ee" stroke-width="1.4"/><path d="M488.6,65.6 C486.6,63.8 484.8,61.6 484.8,59.3 C484.8,55.6 487.8,53.6 491.3,53.6 C494.8,53.6 497.8,55.6 497.8,59.3 C497.8,61.6 496,63.8 494,65.6 V70.2 H488.6 Z" fill="none" stroke="#eaf4ee" stroke-width="1.5"/><path d="M488.6,68 H494" stroke="#eaf4ee" stroke-width="1.2"/><path d="M489.5,72.2 H493.2" stroke="#eaf4ee" stroke-width="1.4"/><circle cx="607" cy="60.6" r="5.4" fill="none" stroke="#eaf4ee" stroke-width="1.4"/><path d="M599.4,72.6 C600.2,68.8 603,66.2 606.8,66.2 C608.2,66.2 609.6,66.5 610.8,67" fill="none" stroke="#eaf4ee" stroke-width="1.4"/><path d="M608,69.5 H617 M612.5,65 V74" stroke="#eaf4ee" stroke-width="1.3"/><rect x="13" y="208.8" width="16" height="16" rx="1" fill="#7f4da6"/><rect x="15.5" y="210.7" width="11" height="6.6" fill="#fff"/><rect x="17.3" y="220" width="7.2" height="4.8" fill="#fff"/><rect x="19.3" y="221.3" width="2.6" height="3.5" fill="#7f4da6"/><path d="M52,214.6 H59.4 A4.75,4.75 0 0 1 59.4,224.1 H57.6" fill="none" stroke="#3b78b8" stroke-width="2.9"/><polygon points="47.2,214.6 54.4,210.2 55,212 52.4,214.6 55,217.2 54.4,219" fill="#3b78b8"/><path d="M75.25,214.7 L78,217.7 L80.75,214.7" fill="none" stroke="#444" stroke-width="1.1"/><path d="M110.8,214.6 H103.4 A4.75,4.75 0 0 0 103.4,224.1 H105.2" fill="none" stroke="#b0b0b0" stroke-width="2.9"/><polygon points="113.6,214.6 106.4,210.2 105.8,212 108.4,214.6 105.8,217.2 106.4,219" fill="#b0b0b0"/><path d="M123.25,214.7 L126,217.7 L128.75,214.7" fill="none" stroke="#b0b0b0" stroke-width="1.1"/><rect x="140.7" y="208.7" width="16.4" height="10.4" fill="#fff" stroke="#555" stroke-width="1.3"/><rect x="154.1" y="210.2" width="1.8" height="2.6" fill="#3f6fae"/><path d="M144.9,213.4 H150.9 M144.9,215.4 H150.9" stroke="#888" stroke-width="0.9"/><path d="M153.2,225 V223.5 C153.2,220.4 159.3,220.4 159.3,223.5 V225 Z" fill="#5e9a7e"/><circle cx="156.2" cy="218" r="2.3" fill="#5e9a7e"/><path d="M147.3,227.2 V225.2 C147.3,221.6 154.7,221.6 154.7,225.2 V227.2 Z" fill="#3f73ae" stroke="#e6e6e6" stroke-width="0.8"/><circle cx="151" cy="220.6" r="2.5" fill="#3f73ae" stroke="#e6e6e6" stroke-width="0.8"/><path d="M169.25,214.7 L172,217.7 L174.75,214.7" fill="none" stroke="#444" stroke-width="1.1"/><path d="M195.8,214.2 H201.4" stroke="#444" stroke-width="1.1"/><polygon points="195.8,216.4 201.4,216.4 198.6,219.8" fill="#444"/><rect x="8.5" y="248.5" width="126" height="28.6" fill="#fff" stroke="#c6c6c6" stroke-width="1"/><polygon points="119.4,261.4 125.8,261.4 122.6,265.2" fill="#555"/><rect x="153" y="255.7" width="2.8" height="2.8" fill="#b0b0b0"/><rect x="153" y="260.8" width="2.8" height="2.8" fill="#b0b0b0"/><rect x="153" y="266" width="2.8" height="2.8" fill="#b0b0b0"/><rect x="172.5" y="248.5" width="136" height="28.6" fill="#fff" stroke="#c6c6c6" stroke-width="1"/><rect x="312.5" y="248.5" width="367" height="28.6" fill="#fff" stroke="#c6c6c6" stroke-width="1"/><path d="M188,258 L201.3,268.6 M201.3,258 L188,268.6" stroke="#b8b8b8" stroke-width="1.7"/><path d="M232.8,263.6 L238.6,269.2 L248.2,257.6" fill="none" stroke="#b8b8b8" stroke-width="2.4"/><text x="276" y="267" font-family="Liberation Serif" font-style="italic" font-weight="bold" font-size="19" fill="#707070" textLength="16.3" lengthAdjust="spacingAndGlyphs">fx</text><path d="M665.4,260.6 L669.5,265 L673.6,260.6" fill="none" stroke="#666" stroke-width="2.2"/><rect x="384" y="606" width="19" height="12.6" rx="1.5" fill="#4a4a4a"/><rect x="388.2" y="622.3" width="4.6" height="1.5" fill="#4a4a4a"/><circle cx="397.4" cy="619.4" r="6.6" fill="#f3f3f3"/><circle cx="397.4" cy="619.4" r="4.2" fill="none" stroke="#4a4a4a" stroke-width="2.6" stroke-dasharray="2.2,1.1"/><circle cx="397.4" cy="619.4" r="3.2" fill="#4a4a4a"/><circle cx="397.4" cy="619.4" r="1.4" fill="#fff"/><rect x="538.5" y="607.5" width="15" height="14.5" fill="none" stroke="#707070" stroke-width="1.4"/><path d="M543.5,607.5 V622 M548.5,607.5 V622 M538.5,612.3 H553.5 M538.5,617.1 H553.5" stroke="#707070" stroke-width="1.4"/><rect x="587.6" y="607.5" width="15.6" height="14.5" fill="none" stroke="#707070" stroke-width="1.3"/><rect x="591.6" y="609.3" width="7.6" height="11" fill="none" stroke="#707070" stroke-width="1.2"/><path d="M593.3,612 H597.5 M593.3,614.7 H597.5 M593.3,617.4 H597.5" stroke="#707070" stroke-width="1"/><rect x="637.6" y="607.5" width="15.6" height="14.5" fill="none" stroke="#707070" stroke-width="1.3"/><path d="M642,607.5 V616.7 M647.3,607.5 V616.7 M637.6,616.7 H647.3" fill="none" stroke="#707070" stroke-width="1.3"/><polygon points="379.5,548 382,548 379.5,553 381,553 376,562 377.4,555.5 375.2,555.5" fill="#e8bd66"/><path d="M380,549.6 H393 V565.4 H375.4 V562" fill="none" stroke="#707070" stroke-width="1.2"/><rect x="379.5" y="548.8" width="14" height="1.8" fill="#707070"/><rect x="380.5" y="553" width="6.3" height="2.5" fill="#d9503a"/><rect x="380" y="557.2" width="9.8" height="2.6" fill="#3f73ae"/><rect x="380" y="561" width="8" height="2.8" fill="#5e9a7e"/></svg>
</body></html>
